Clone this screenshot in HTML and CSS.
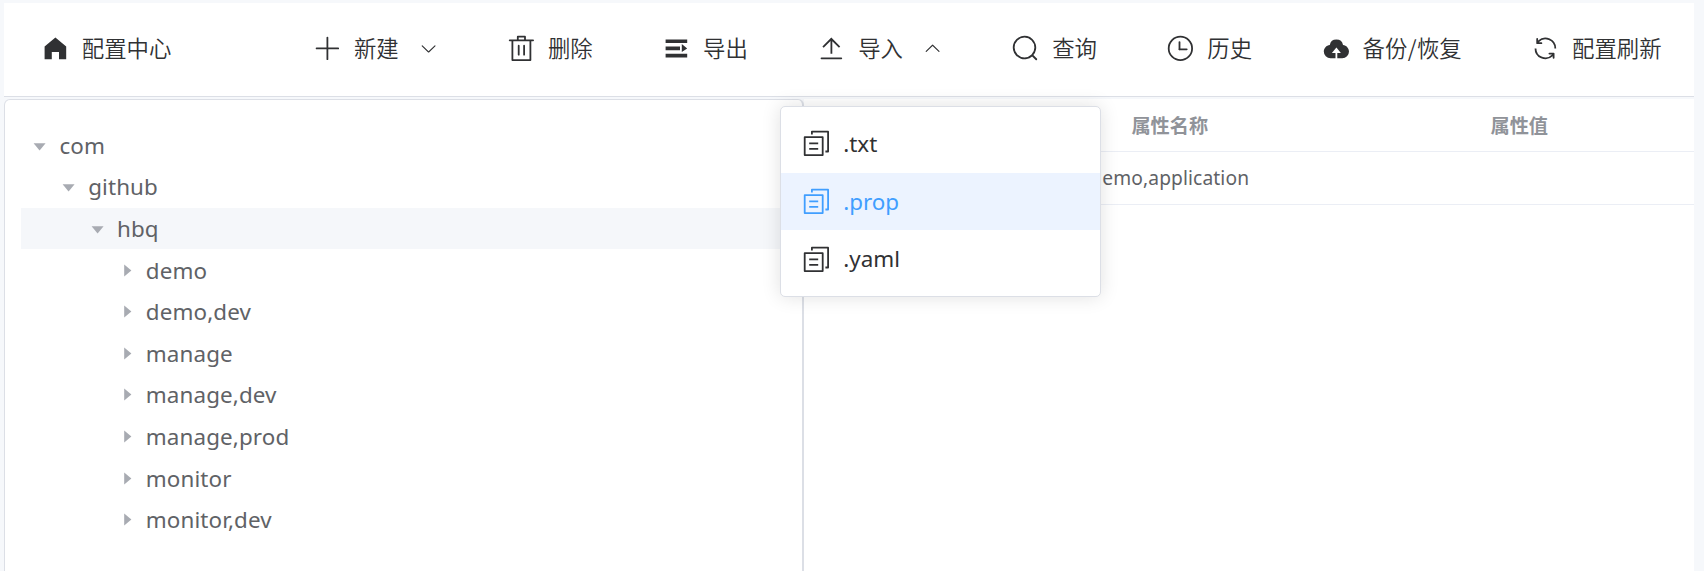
FILE: index.html
```html
<!DOCTYPE html>
<html lang="zh-CN">
<head>
<meta charset="utf-8">
<title>配置中心</title>
<link rel="stylesheet" href="styles.css">
</head>
<body>
<svg class="defs" aria-hidden="true">
  <symbol id="home" viewBox="0 0 1024 1024"><path d="M512 128 128 447.936V896h255.936V640H640v256h255.936V447.936z"/></symbol>
  <symbol id="plus" viewBox="0 0 1024 1024"><path d="M480 480V128a32 32 0 0 1 64 0v352h352a32 32 0 1 1 0 64H544v352a32 32 0 1 1-64 0V544H128a32 32 0 0 1 0-64z"/></symbol>
  <symbol id="delete" viewBox="0 0 1024 1024"><path d="M160 256H96a32 32 0 0 1 0-64h256V95.936a32 32 0 0 1 32-32h256a32 32 0 0 1 32 32V192h256a32 32 0 1 1 0 64h-64v672a32 32 0 0 1-32 32H192a32 32 0 0 1-32-32zm448-64v-64H416v64zM224 896h576V256H224zm192-128a32 32 0 0 1-32-32V416a32 32 0 0 1 64 0v320a32 32 0 0 1-32 32m192 0a32 32 0 0 1-32-32V416a32 32 0 0 1 64 0v320a32 32 0 0 1-32 32"/></symbol>
  <symbol id="expand" viewBox="0 0 1024 1024"><path d="M128 192h768v128H128zm0 256h512v128H128zm0 256h768v128H128zm576-352 192 160-192 128z"/></symbol>
  <symbol id="upload" viewBox="0 0 1024 1024"><path d="M160 832h704a32 32 0 1 1 0 64H160a32 32 0 1 1 0-64m384-578.304V704h-64V247.296L237.248 490.048 192 444.8 508.8 128l316.8 316.8-45.312 45.248z"/></symbol>
  <symbol id="search" viewBox="0 0 1024 1024"><path d="m795.904 750.72 124.992 124.928a32 32 0 0 1-45.248 45.248L750.656 795.904a416 416 0 1 1 45.248-45.248zM480 832a352 352 0 1 0 0-704 352 352 0 0 0 0 704"/></symbol>
  <symbol id="clock" viewBox="0 0 1024 1024"><path d="M512 896a384 384 0 1 0 0-768 384 384 0 0 0 0 768m0 64a448 448 0 1 1 0-896 448 448 0 0 1 0 896"/><path d="M480 256a32 32 0 0 1 32 32v256a32 32 0 0 1-64 0V288a32 32 0 0 1 32-32"/><path d="M480 512h256q32 0 32 32t-32 32H480q-32 0-32-32t32-32"/></symbol>
  <symbol id="cloud" viewBox="0 0 1024 1024"><path d="M544 864V672h128L512 480 352 672h128v192H320v-1.6c-5.376.32-10.496 1.6-16 1.6A240 240 0 0 1 64 624c0-123.136 93.12-223.488 212.608-237.248A239.81 239.81 0 0 1 512 192a239.87 239.87 0 0 1 235.456 194.752c119.488 13.76 212.48 114.112 212.48 237.248a240 240 0 0 1-240 240c-5.376 0-10.56-1.28-16-1.6v1.6z"/></symbol>
  <symbol id="refresh" viewBox="0 0 1024 1024"><path d="M771.776 794.88A384 384 0 0 1 128 512h64a320 320 0 0 0 555.712 216.448H654.72a32 32 0 1 1 0-64h149.056a32 32 0 0 1 32 32v148.928a32 32 0 1 1-64 0v-50.56zM276.288 295.616h92.992a32 32 0 0 1 0 64H220.16a32 32 0 0 1-32-32V178.56a32 32 0 0 1 64 0v50.56A384 384 0 0 1 896.128 512h-64a320 320 0 0 0-555.776-216.384z"/></symbol>
  <symbol id="arrow" viewBox="0 0 1024 1024"><path d="M831.872 340.864 512 652.672 192.128 340.864a30.592 30.592 0 0 0-42.752 0 29.12 29.12 0 0 0 0 41.6L489.664 714.24a32 32 0 0 0 44.672 0l340.288-331.712a29.12 29.12 0 0 0 0-41.728 30.592 30.592 0 0 0-42.752 0z"/></symbol>
  <symbol id="caret" viewBox="0 0 1024 1024"><path d="M384 192v640l384-320.064z"/></symbol>
  <symbol id="copy" viewBox="0 0 1024 1024"><path d="M128 320v576h576V320zm-32-64h640a32 32 0 0 1 32 32v640a32 32 0 0 1-32 32H96a32 32 0 0 1-32-32V288a32 32 0 0 1 32-32M960 96v704a32 32 0 0 1-32 32h-96v-64h64V128H384v64h-64V96a32 32 0 0 1 32-32h576a32 32 0 0 1 32 32M256 672h320v64H256zm0-192h320v64H256z"/></symbol>
</svg>
<header class="menu">
  <div class="item brand"><svg class="icon"><use href="#home"/></svg><span class="label">配置中心</span></div>
  <div class="item submenu"><svg class="icon"><use href="#plus"/></svg><span class="label">新建</span><svg class="arrow"><use href="#arrow"/></svg></div>
  <div class="item"><svg class="icon"><use href="#delete"/></svg><span class="label">删除</span></div>
  <div class="item"><svg class="icon"><use href="#expand"/></svg><span class="label">导出</span></div>
  <div class="item submenu">
    <svg class="icon"><use href="#upload"/></svg><span class="label">导入</span><svg class="arrow up"><use href="#arrow"/></svg>
    <div class="popup">
      <div class="option"><svg class="icon"><use href="#copy"/></svg><span>.txt</span></div>
      <div class="option active"><svg class="icon"><use href="#copy"/></svg><span>.prop</span></div>
      <div class="option"><svg class="icon"><use href="#copy"/></svg><span>.yaml</span></div>
    </div>
  </div>
  <div class="item"><svg class="icon"><use href="#search"/></svg><span class="label">查询</span></div>
  <div class="item"><svg class="icon"><use href="#clock"/></svg><span class="label">历史</span></div>
  <div class="item"><svg class="icon"><use href="#cloud"/></svg><span class="label">备份<span class="slash">/</span>恢复</span></div>
  <div class="item"><svg class="icon"><use href="#refresh"/></svg><span class="label">配置刷新</span></div>
</header>
<main class="content">
  <section class="panel">
    <div class="node"><svg class="caret open"><use href="#caret"/></svg><span>com</span></div>
    <div class="node level-2"><svg class="caret open"><use href="#caret"/></svg><span>github</span></div>
    <div class="node level-3 current"><svg class="caret open"><use href="#caret"/></svg><span>hbq</span></div>
    <div class="node level-4"><svg class="caret"><use href="#caret"/></svg><span>demo</span></div>
    <div class="node level-4"><svg class="caret"><use href="#caret"/></svg><span>demo,dev</span></div>
    <div class="node level-4"><svg class="caret"><use href="#caret"/></svg><span>manage</span></div>
    <div class="node level-4"><svg class="caret"><use href="#caret"/></svg><span>manage,dev</span></div>
    <div class="node level-4"><svg class="caret"><use href="#caret"/></svg><span>manage,prod</span></div>
    <div class="node level-4"><svg class="caret"><use href="#caret"/></svg><span>monitor</span></div>
    <div class="node level-4"><svg class="caret"><use href="#caret"/></svg><span>monitor,dev</span></div>
  </section>
  <section class="table">
    <div class="row head"><div></div><div>属性名称</div><div>属性值</div></div>
    <div class="row"><div></div><div class="cell">demo,application</div><div></div></div>
  </section>
</main>
</body>
</html>
```

FILE: styles.css
```css
* { box-sizing: border-box; }
body {
  margin: 0;
  height: 571px;
  padding: 3px 10px 0 4px;
  overflow: hidden;
  display: flex;
  flex-direction: column;
  gap: 2px;
  background: #f6f8fb;
  color: #303133;
  font: 22.4px "Noto Sans", "Noto Sans CJK SC", sans-serif;
}
svg { fill: currentColor; flex: none; }
.defs { position: absolute; width: 0; height: 0; }
.menu {
  flex: none;
  height: 94px;
  padding-bottom: 2px;
  display: flex;
  background: #fff;
  border-bottom: 1px solid #dcdfe6;
  font-family: "Noto Sans CJK SC", sans-serif;
  font-weight: 350;
}
.item {
  position: relative;
  display: flex;
  align-items: center;
  padding: 0 32px;
  white-space: nowrap;
}
.label { margin-left: -.6px; margin-right: .6px; padding-bottom: 3px; }
.brand { margin-right: 72.2px; }
.icon { width: 28.8px; height: 28.8px; margin: 0 12.8px 0 4.8px; }
.arrow { width: 19.2px; height: 19.2px; margin-left: 19.6px; }
.up { transform: rotate(180deg); }
.slash { display: inline-block; width: 9.6px; text-align: center; }
.popup {
  position: absolute;
  z-index: 2;
  left: 0;
  top: 103px;
  width: 321px;
  margin-left: -.6px;
  height: 191px;
  padding: 8px 0;
  background: #fff;
  border: 1px solid #dcdfe6;
  border-radius: 5px;
  box-shadow: 0 0 19px rgba(0, 0, 0, .12);
  font-family: "Noto Sans", sans-serif;
  font-weight: 400;
}
.option { display: flex; align-items: center; height: 57.6px; padding: 0 16px; }
.option.active { background: #ecf3ff; color: #409eff; }
.content { flex: 1; display: grid; grid-template-columns: 800px 1fr; }
.panel {
  padding: 24.6px 16px 0;
  background: #fff;
  border: 1px solid #dcdfe6;
  border-right-width: 2px;
  border-bottom: 0;
  border-radius: 6px 6px 0 0;
  color: #606266;
  letter-spacing: .12px;
}
.node { display: flex; align-items: center; height: 41.6px; }
.caret { width: 19.2px; height: 19.2px; margin: 0 9.8px 0 9.4px; color: #a8abb2; }
.open { transform: rotate(90deg); }
.level-2 { padding-left: 28.8px; }
.level-3 { padding-left: 57.6px; }
.level-4 { padding-left: 86.4px; }
.current { background: #f5f7fa; }
.table { background: #fff; color: #606266; font-size: 19.2px; }
.row {
  display: grid;
  grid-template-columns: 191px 1fr 1fr;
  align-items: center;
  height: 53px;
  border-bottom: 1px solid #ebeef5;
  text-align: center;
}
.cell { letter-spacing: .12px; padding-bottom: 2px; }
.head { color: #909399; font-weight: 700; }
```
